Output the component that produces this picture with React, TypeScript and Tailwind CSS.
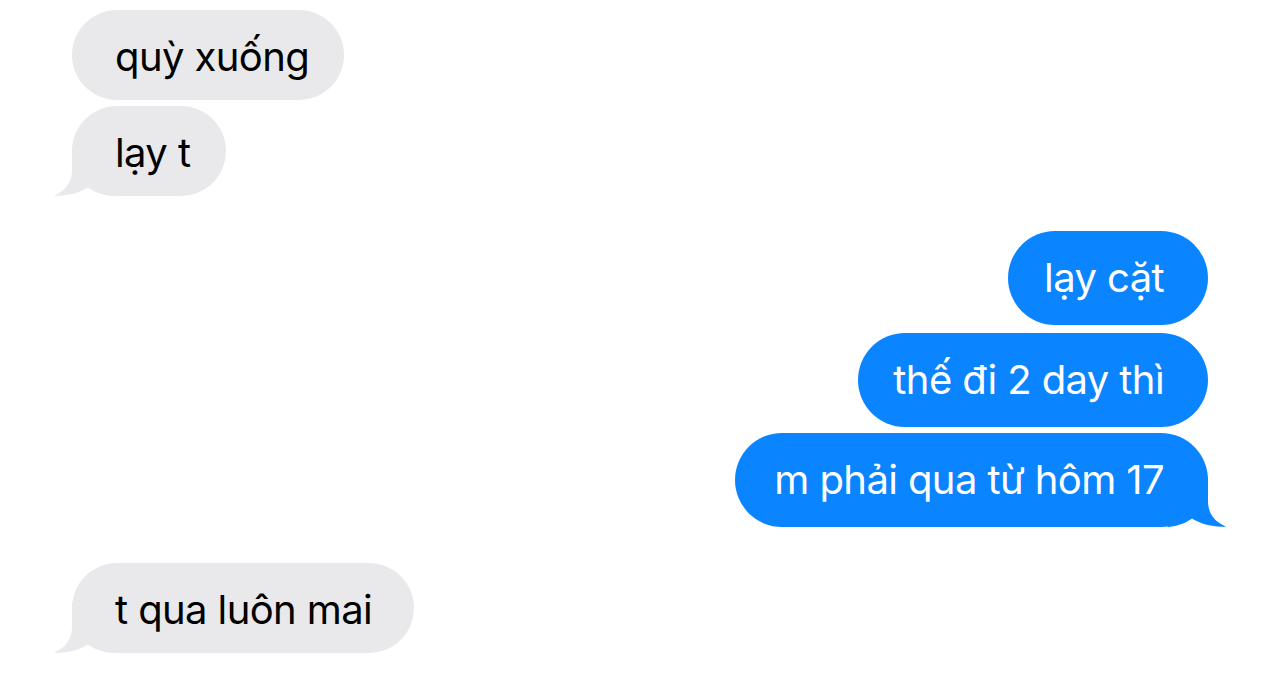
import React from 'react';

type Msg = { text: string; mine: boolean; w: number; mt: number; tail?: boolean };

const MESSAGES: Msg[] = [
  { text: 'quỳ xuống', mine: false, w: 272, mt: 10 },
  { text: 'lạy t', mine: false, w: 154, mt: 6, tail: true },
  { text: 'lạy cặt', mine: true, w: 200, mt: 35 },
  { text: 'thế đi 2 day thì', mine: true, w: 350, mt: 8 },
  { text: 'm phải qua từ hôm 17', mine: true, w: 473, mt: 6, tail: true },
  { text: 't qua luôn mai', mine: false, w: 342, mt: 36, tail: true },
];

// little curl at the bottom corner of the last bubble in a group
const Tail: React.FC<{ mine: boolean }> = ({ mine }) => (
  <svg
    width="60"
    height="50"
    viewBox="0 0 60 50"
    className={mine ? 'absolute -right-[20px] bottom-0 -scale-x-100' : 'absolute -left-[20px] bottom-0'}
  >
    <path
      d="M20 0 L20 24 C20 37 13 45 2 49.5 C15 50.5 27 47 36 41.5 C42 46 50 49 60 50 L60 0 Z"
      fill={mine ? '#0a84ff' : '#e9e9eb'}
    />
  </svg>
);

const Bubble: React.FC<{ m: Msg }> = ({ m }) => (
  <div
    className={m.mine ? 'flex justify-end pr-[72px]' : 'flex justify-start pl-[72px]'}
    style={{ marginTop: m.mt }}
  >
    <div
      className={
        m.mine
          ? 'relative h-[94px] rounded-[47px] bg-[#0a84ff] text-white flex items-center justify-end pr-[44px]'
          : 'relative h-[90px] rounded-[45px] bg-[#e9e9eb] text-black flex items-center pl-[43px]'
      }
      style={{ width: m.w }}
    >
      {m.tail && <Tail mine={m.mine} />}
      <span
        className={
          m.mine
            ? 'relative whitespace-nowrap text-[40px] leading-none tracking-[-0.6px]'
            : 'relative whitespace-nowrap text-[40px] leading-none tracking-[-0.6px] mt-[4px]'
        }
      >
        {m.text}
      </span>
    </div>
  </div>
);

const App: React.FC = () => {
  return (
    <div className="w-[1280px] h-[674px] bg-white overflow-hidden font-['Inter','Noto_Sans',sans-serif]">
      {MESSAGES.map((m, i) => (
        <Bubble key={i} m={m} />
      ))}
    </div>
  );
};

export default App;
